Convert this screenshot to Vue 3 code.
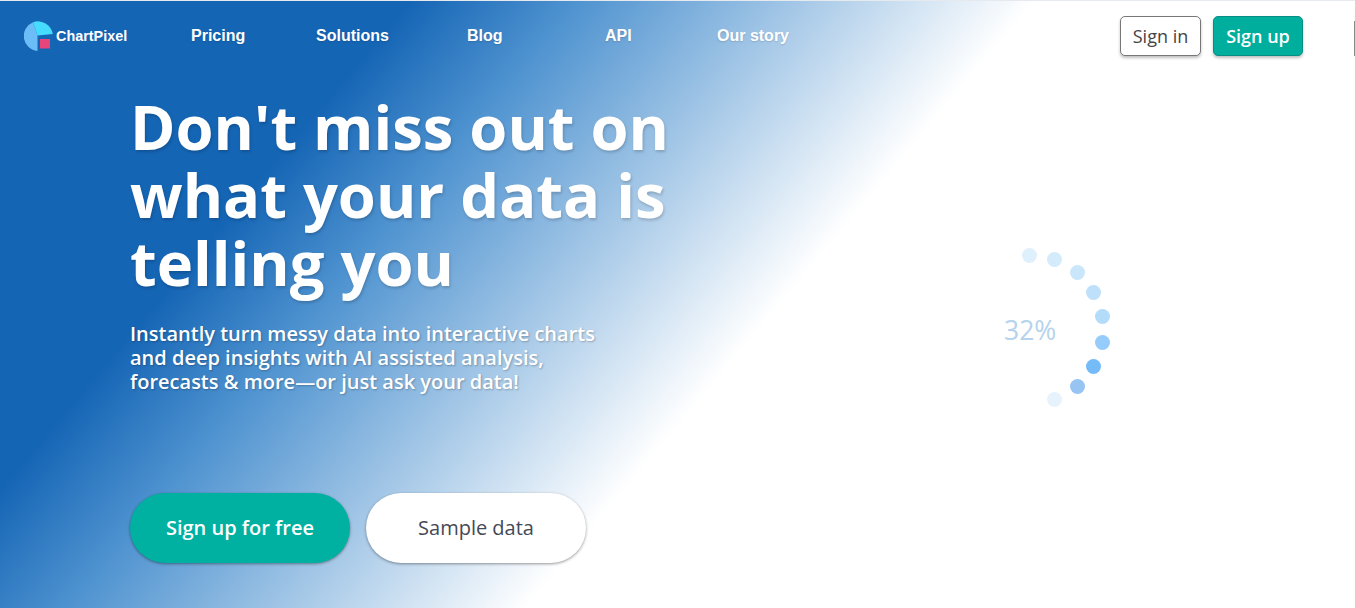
<template>
  <div class="page">
    <header class="topbar">
      <a class="logo">
        <svg width="30" height="30" viewBox="0 0 30 30">
          <path d="M9 1.200 A15 15 0 0 0 13.500 30 L13.500 14.500 Z" fill="#6bbcf7" />
          <path d="M9 1.200 A15 15 0 0 1 28.800 13 L13.500 14.500 Z" fill="#45dcff" />
          <rect x="16" y="18" width="10" height="9.500" fill="#e8457a" />
        </svg>
        <span>ChartPixel</span>
      </a>
      <nav class="nav">
        <a v-for="item in navItems" :key="item.label" :style="{ width: item.width + 'px' }">{{ item.label }}</a>
      </nav>
      <div class="auth">
        <button class="btn-in">Sign in</button>
        <button class="btn-up">Sign up</button>
      </div>
    </header>

    <main class="hero">
      <section class="copy">
        <h1>Don't miss out on what your data is telling you</h1>
        <p>Instantly turn messy data into interactive charts and deep insights with AI assisted analysis, forecasts &amp; more—or just ask your data!</p>
        <div class="cta">
          <button class="cta-main">Sign up for free</button>
          <button class="cta-alt">Sample data</button>
        </div>
      </section>
      <div class="loader">
        <span class="percent">32%</span>
        <i v-for="dot in dots" :key="dot.angle" class="dot" :style="dot.style"></i>
      </div>
    </main>
    <div class="edge"></div>
  </div>
</template>

<script setup>
const navItems = [
  { label: 'Pricing', width: 125 },
  { label: 'Solutions', width: 151 },
  { label: 'Blog', width: 138 },
  { label: 'API', width: 112 },
  { label: 'Our story', width: 137 }
]

// 加载圈的圆点，每 20 度一个
const dotColors = ['#dff0fd', '#d4ebfc', '#c9e6fb', '#bfe0fa', '#b3dcfb', '#96ccfb', '#74bbf8', '#98c4f3', '#e6f3fd']
const dots = dotColors.map((color, i) => {
  const angle = -90 + i * 20
  const rad = (angle * Math.PI) / 180
  return {
    angle,
    style: {
      left: 74 + 74 * Math.cos(rad) + 'px',
      top: 74 + 74 * Math.sin(rad) + 'px',
      background: color
    }
  }
})
</script>

<style>
html, body {
  margin: 0;
  overflow: hidden;
}
</style>

<style scoped>
.page {
  position: relative;
  height: 608px;
  box-sizing: border-box;
  border-top: 1px solid #e6eaee;
  background: linear-gradient(130deg, #1565b5 22%, #4f93d0 31%, #ffffff 55.5%);
  font-family: "Open Sans", sans-serif;
  overflow: hidden;
}

.topbar {
  display: flex;
  align-items: center;
  height: 70px;
  padding: 0 52px 0 24px;
}

.logo {
  display: flex;
  align-items: center;
  gap: 2px;
  width: 128px;
  color: #fff;
  font: bold 14.4px "Liberation Sans", sans-serif;
}

.logo svg {
  flex: none;
}

.nav {
  display: flex;
  flex: 1;
  margin-left: 39px;
}

.nav a {
  color: #fff;
  font: bold 16px "Liberation Sans", sans-serif;
  text-shadow: 0 1px 2px rgba(0, 0, 0, 0.15);
}

.auth {
  display: flex;
  gap: 12px;
}

.auth button {
  height: 40px;
  border-radius: 5px;
  font: 18px "Open Sans", sans-serif;
  box-shadow: 0 2px 3px rgba(0, 0, 0, 0.25);
  padding: 0;
}

.btn-in {
  width: 81px;
  background: #fff;
  border: 1px solid #777;
  color: #444;
}

.btn-up {
  width: 90px;
  background: #00ae9e;
  border: 1px solid #078f83;
  color: #fff;
  font-weight: 600 !important;
}

.hero {
  position: relative;
  padding: 21px 0 0 130px;
}

.copy {
  width: 560px;
}

h1 {
  margin: 0;
  width: 545px;
  color: #fff;
  font-size: 61.500px;
  font-weight: 700;
  line-height: 68px;
  text-shadow: 1px 2px 3px rgba(0, 0, 0, 0.18);
}

p {
  margin: 26px 0 0;
  width: 480px;
  color: #fff;
  font-size: 20px;
  font-weight: 600;
  line-height: 24px;
  text-shadow: 1px 1px 2px rgba(0, 0, 0, 0.25);
}

.cta {
  display: flex;
  gap: 16px;
  margin-top: 99px;
}

.cta button {
  width: 220px;
  height: 70px;
  border-radius: 35px;
  border: none;
  font: 20px "Open Sans", sans-serif;
  box-shadow: 0 1px 3px rgba(0, 0, 0, 0.4);
  padding: 0 0 2px;
}

.cta-main {
  background: #00b0a0;
  color: #fff;
  font-weight: 600 !important;
}

.cta-alt {
  background: #fff;
  color: #444955;
}

.loader {
  position: absolute;
  left: 955px;
  top: 184px;
  width: 148px;
  height: 148px;
}

.percent {
  position: absolute;
  left: 49px;
  top: 57px;
  color: #b5d3ec;
  font-size: 26.500px;
  line-height: 36px;
}

.dot {
  position: absolute;
  width: 15px;
  height: 15px;
  margin: -7px 0 0 -7px;
  border-radius: 50%;
}

.edge {
  position: absolute;
  right: 0;
  top: 20px;
  width: 1px;
  height: 35px;
  background: #8a8a8a;
}
</style>
